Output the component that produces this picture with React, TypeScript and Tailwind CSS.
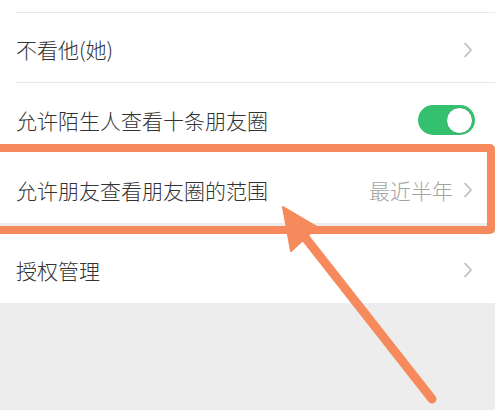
import React from 'react';

const font = { fontFamily: '"Noto Sans CJK SC", "Noto Sans", sans-serif' };

const Chevron = () => (
  <svg width="10" height="16" viewBox="0 0 10 16" className="shrink-0">
    <path d="M2 1.5 L8 8 L2 14.5" fill="none" stroke="#b9b9b9" strokeWidth="1.5" strokeLinecap="round" strokeLinejoin="round" />
  </svg>
);

const Toggle = () => (
  <div className="w-[57px] h-[30px] rounded-full bg-[#35c06f] flex items-center justify-end pr-[2px]">
    <div className="w-[27px] h-[27px] rounded-full bg-white border border-[#2fa862]" />
  </div>
);

interface RowProps {
  label: string;
  value?: string;
  right?: React.ReactNode;
  line?: boolean;
}

const Row: React.FC<RowProps> = ({ label, value, right, line = true }) => (
  <div className="h-[70px] bg-white pl-4 flex">
    <div className={`flex-1 flex items-center justify-between pr-[22px] pt-[4px] ${line ? 'border-b border-[#e8e8e8]' : ''}`}>
      <span className="text-[21px] font-light text-[#333333] leading-none">{label}</span>
      <div className="flex items-center gap-[10px]">
        {value && <span className="text-[21px] font-light text-[#a3a3a3] leading-none">{value}</span>}
        {right ?? <Chevron />}
      </div>
    </div>
  </div>
);

const App: React.FC = () => {
  return (
    <div className="relative w-[503px] h-[410px] bg-white overflow-hidden" style={font}>
      <div className="w-[495px] h-full flex flex-col bg-[#ededed]">
        <div className="h-[13px] bg-white pl-4 flex">
          <div className="flex-1 border-b border-[#e8e8e8]" />
        </div>
        <Row label="不看他(她)" />
        <Row label="允许陌生人查看十条朋友圈" right={<div className="-mr-[2px]"><Toggle /></div>} line={false} />
        <Row label="允许朋友查看朋友圈的范围" value="最近半年" line={false} />
        <div className="h-[10px]" />
        <Row label="授权管理" line={false} />
      </div>

      {/* highlight box */}
      <div className="absolute left-[-12px] top-[144px] w-[507px] h-[90px] border-[8px] border-[#f68a5c] rounded-[5px]" />

      {/* arrow */}
      <svg className="absolute left-0 top-0" width="503" height="410" viewBox="0 0 503 410">
        <line x1="432" y1="399" x2="300" y2="231" stroke="#f68a5c" strokeWidth="9" strokeLinecap="round" />
        <polygon points="283,207 317,227 291,251" fill="#f68a5c" stroke="#f68a5c" strokeWidth="2" strokeLinejoin="round" />
      </svg>
    </div>
  );
};

export default App;
